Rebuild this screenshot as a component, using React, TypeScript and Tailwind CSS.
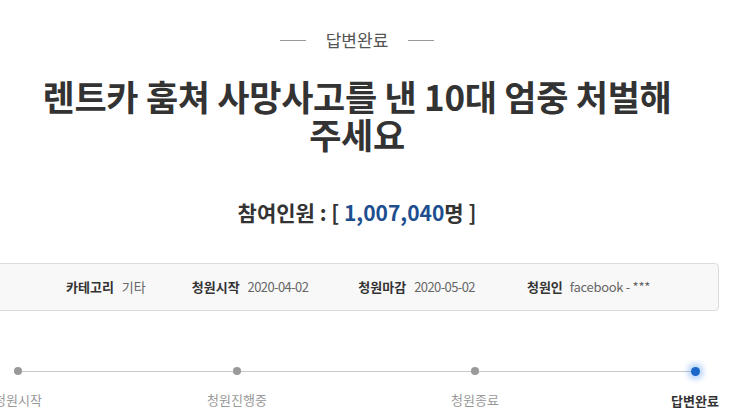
import React from "react";

const font = { fontFamily: '"Noto Sans CJK KR", "Noto Sans", sans-serif' };

export default function App() {
  const steps = [
    { label: "청원시작", x: 18 },
    { label: "청원진행중", x: 237 },
    { label: "청원종료", x: 475 },
    { label: "답변완료", x: 695, active: true },
  ];
  return (
    <div
      className="w-[745px] h-[413px] overflow-hidden bg-white text-[#333]"
      style={font}
    >
      <div className="w-[714px] flex flex-col">
        <div className="pt-[29px] flex items-center justify-center gap-[20px]">
          <div className="w-[26px] h-px bg-[#999]" />
          <div className="text-[17px] leading-[22px] text-[#555]">답변완료</div>
          <div className="w-[26px] h-px bg-[#999]" />
        </div>
        <h1 className="mt-[26px] text-center text-[35px] leading-[38px] font-bold text-[#333] tracking-[-0.3px]">
          렌트카 훔쳐 사망사고를 낸 10대 엄중 처벌해
          <br />
          주세요
        </h1>
        <div className="mt-[46px] text-center text-[21px] leading-[26px] font-bold text-[#333]">
          참여인원 : [ <span className="text-[#1d4e8f]">1,007,040</span>명 ]
        </div>
        <div className="mt-[38px] ml-[-10px] w-[729px] h-[48px] border border-[#dcdcdc] rounded-r-[4px] bg-[#f8f8f8] flex items-center text-[13px] leading-[16px]">
          <div className="ml-[75px] flex items-center gap-[8px]">
            <span className="font-bold text-[#333]">카테고리</span>
            <span className="text-[#666]">기타</span>
          </div>
          <div className="ml-[46px] flex items-center gap-[8px]">
            <span className="font-bold text-[#333]">청원시작</span>
            <span className="text-[#666] tracking-[-0.6px]">2020-04-02</span>
          </div>
          <div className="ml-[50px] flex items-center gap-[8px]">
            <span className="font-bold text-[#333]">청원마감</span>
            <span className="text-[#666] tracking-[-0.6px]">2020-05-02</span>
          </div>
          <div className="ml-[52px] flex items-center gap-[7px]">
            <span className="font-bold text-[#333]">청원인</span>
            <span className="text-[#666] tracking-[-0.3px]">facebook - ***</span>
          </div>
        </div>
        <div className="relative mt-[56px] h-[40px]">
          <div className="absolute left-[18px] w-[677px] top-[4px] h-px bg-[#c8c8c8]" />
          {steps.map((s) => (
            <div
              key={s.label}
              className="absolute top-0 w-[100px] flex flex-col items-center"
              style={{ left: s.x - 50 }}
            >
              {s.active ? (
                <div className="w-[9px] h-[9px] rounded-full bg-[#1a66c9] shadow-[0_0_5px_4px_rgba(80,150,240,0.35)]" />
              ) : (
                <div className="w-[8px] h-[8px] rounded-full bg-[#999]" />
              )}
              <div
                className={
                  "mt-[17px] text-[13px] leading-[16px] whitespace-nowrap " +
                  (s.active ? "font-bold text-[#333]" : "text-[#999]")
                }
              >
                {s.label}
              </div>
            </div>
          ))}
        </div>
      </div>
    </div>
  );
}
